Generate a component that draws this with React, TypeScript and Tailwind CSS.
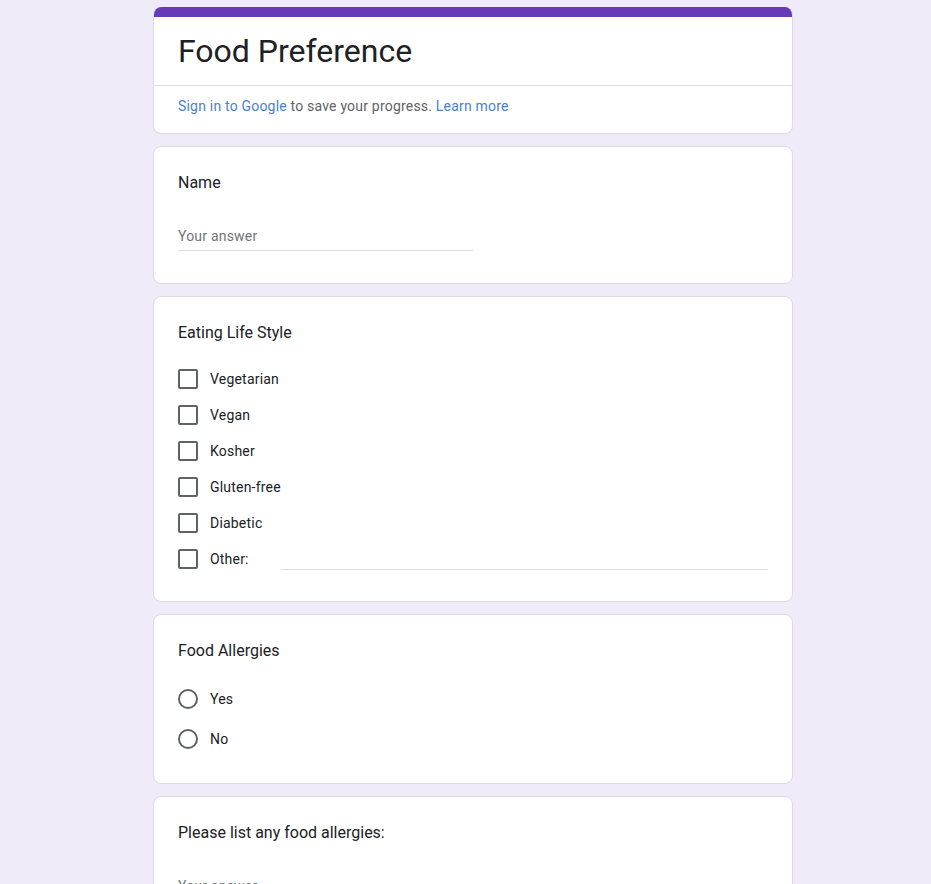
import React from "react";

const font = { fontFamily: "Roboto, 'Noto Sans', Arial, sans-serif" };

function Card({ children, className = "" }: { children: React.ReactNode; className?: string }) {
  return (
    <div className={"w-[640px] rounded-lg border border-[#dadce0] bg-white " + className}>{children}</div>
  );
}

function Checkbox({ label, other = false }: { label: string; other?: boolean }) {
  return (
    <div className="flex h-5 items-center">
      <div className="h-5 w-5 shrink-0 rounded-[2px] border-2 border-[#5f6368]" />
      <span className="ml-3 text-[14px] leading-5 tracking-[0.2px] text-[#202124]">{label}</span>
      {other && <div className="ml-[32px] mt-[20px] h-px flex-1 bg-[#dadce0]" />}
    </div>
  );
}

function Radio({ label }: { label: string }) {
  return (
    <div className="flex h-5 items-center">
      <div className="h-5 w-5 shrink-0 rounded-full border-2 border-[#5f6368]" />
      <span className="ml-3 text-[14px] leading-5 tracking-[0.2px] text-[#202124]">{label}</span>
    </div>
  );
}

function TextAnswer() {
  return (
    <div className="mt-[31px] w-[295px] border-b border-[#dadce0] pb-[4px]">
      <div className="text-[14px] leading-5 tracking-[0.2px] text-[#70757a]">Your answer</div>
    </div>
  );
}

export default function App() {
  return (
    <div className="min-h-[884px] bg-[#f0ebf8] pt-[7px]" style={font}>
      <div className="ml-[153px] flex w-[640px] flex-col gap-3 pb-10">
        <div className="w-[640px] overflow-hidden rounded-lg border border-t-0 border-[#dadce0] bg-white">
          <div className="h-[10px] bg-[#673ab7]" />
          <div className="px-6 pb-[14px] pt-[14px]">
            <h1 className="text-[32px] leading-[40px] font-normal text-[#202124]">Food Preference</h1>
          </div>
          <div className="h-px bg-[#dadce0]" />
          <div className="px-6 pb-[17px] pt-[10px] text-[14px] leading-5 tracking-[0.2px] text-[#5f6368]">
            <span className="text-[#4a7fd0]">Sign in to Google</span> to save your progress.{" "}
            <span className="text-[#4a7fd0]">Learn more</span>
          </div>
        </div>

        <Card className="px-6 pb-8 pt-6">
          <div className="text-[16px] leading-6 text-[#202124]">Name</div>
          <TextAnswer />
        </Card>

        <Card className="px-6 pb-8 pt-6">
          <div className="text-[16px] leading-6 text-[#202124]">Eating Life Style</div>
          <div className="mt-6 flex flex-col gap-4">
            <Checkbox label="Vegetarian" />
            <Checkbox label="Vegan" />
            <Checkbox label="Kosher" />
            <Checkbox label="Gluten-free" />
            <Checkbox label="Diabetic" />
            <Checkbox label="Other:" other />
          </div>
        </Card>

        <Card className="px-6 pb-[34px] pt-6">
          <div className="text-[16px] leading-6 text-[#202124]">Food Allergies</div>
          <div className="mt-[26px] flex flex-col gap-5">
            <Radio label="Yes" />
            <Radio label="No" />
          </div>
        </Card>

        <Card className="px-6 pb-8 pt-6">
          <div className="text-[16px] leading-6 text-[#202124]">Please list any food allergies:</div>
          <TextAnswer />
        </Card>
      </div>
    </div>
  );
}
